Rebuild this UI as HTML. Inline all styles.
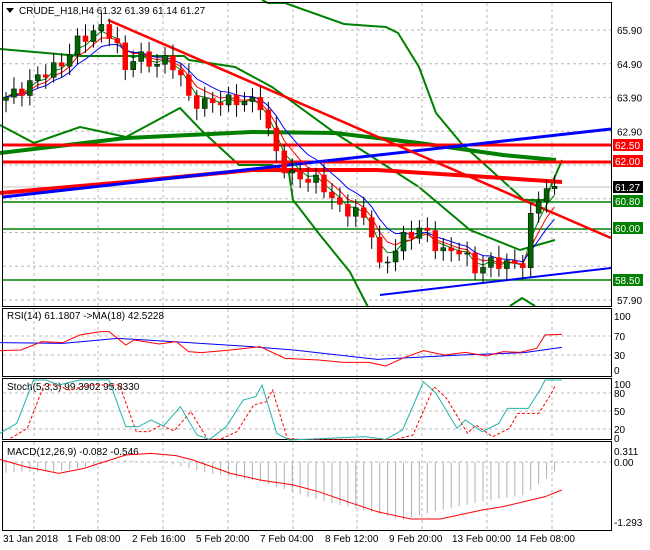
<!DOCTYPE html>
<html><head><meta charset="utf-8"><style>
html,body{margin:0;padding:0;background:#fff;width:650px;height:550px;overflow:hidden}
svg{display:block}
text{font-family:"Liberation Sans",sans-serif;font-size:10px}
</style></head><body>
<svg id="s" width="650" height="550" viewBox="0 0 650 550" xmlns="http://www.w3.org/2000/svg">
<rect width="650" height="550" fill="#fff"/>
<g id="grid" stroke="#b8b8b8" stroke-dasharray="3,3" stroke-width="1"></g>
<g id="main"></g>
<g fill="none" stroke="#000" stroke-width="1">
<rect x="2.5" y="2.5" width="609" height="304"/>
<rect x="2.5" y="308.5" width="609" height="68"/>
<rect x="2.5" y="378.5" width="609" height="61"/>
<rect x="2.5" y="441.5" width="609" height="89"/>
</g>
<polygon points="6,8 14,8 10,13" fill="#000"/>
<text x="19" y="14" fill="#000">CRUDE_H18,H4  61.32 61.39 61.14 61.27</text>
<g id="axis"></g>
<text x="7" y="319" fill="#000">RSI(14) 61.1807  -&gt;MA(18) 42.5228</text>
<text x="7" y="390" fill="#000">Stoch(5,3,3) 99.3902 95.8330</text>
<text x="7" y="455" fill="#000">MACD(12,26,9) -0.082 -0.546</text>
<g fill="#000">
<text x="3" y="542">31 Jan 2018</text>
<text x="67" y="542">1 Feb 08:00</text>
<text x="132" y="542">2 Feb 16:00</text>
<text x="196" y="542">5 Feb 20:00</text>
<text x="260" y="542">7 Feb 04:00</text>
<text x="325" y="542">8 Feb 12:00</text>
<text x="389" y="542">9 Feb 20:00</text>
<text x="452" y="542">13 Feb 00:00</text>
<text x="516" y="542">14 Feb 08:00</text>
</g>
</svg>
<script>
const NS="http://www.w3.org/2000/svg";
const S=document.getElementById('s'),M=document.getElementById('main'),G=document.getElementById('grid'),A=document.getElementById('axis');
function el(p,t,a){const e=document.createElementNS(NS,t);for(const k in a)e.setAttribute(k,a[k]);p.appendChild(e);return e;}
function Y(p){return 30+(65.90-p)*33.75;}
const vx=[34,98,163,228,293,357,422,487,552];
vx.forEach(x=>{el(G,'line',{x1:x,y1:3,x2:x,y2:306});el(G,'line',{x1:x,y1:309,x2:x,y2:376});el(G,'line',{x1:x,y1:379,x2:x,y2:439});el(G,'line',{x1:x,y1:442,x2:x,y2:530});});
[65.9,64.9,63.9,62.9,61.9,60.9,59.9,58.9,57.9].forEach(p=>el(G,'line',{x1:3,y1:Y(p),x2:611,y2:Y(p)}));
[336,355,393,411,429,462].forEach(y=>el(G,'line',{x1:3,y1:y,x2:611,y2:y}));
function pl(par,pts,c,w,extra){const a={points:pts.map(p=>p.join(',')).join(' '),fill:'none',stroke:c,'stroke-width':w};Object.assign(a,extra||{});return el(par,'polyline',a);}
function cz(pts,oy){return pts.map(p=>[p[0]/2.385,p[1]/3+oy]);}
pl(M,[[0,49],[80,56],[184,56],[189,60],[235,67],[272,87],[335,133],[419,187],[470,230],[520,250],[555,240]],'#008000',2);
pl(M,[[262,0],[268,3],[285,3],[344,24],[386,27],[398,33],[419,67],[436,113],[461,143],[524,200],[545,200],[562,160]],'#008000',2);
pl(M,[[0,125],[34,143],[80,127],[126,137],[180,108],[201,130],[239,165],[272,165],[289,173],[293,200],[320,235],[350,272],[368,307]],'#008000',2);
pl(M,[[510,306],[522,298],[535,306]],'#008000',2);
pl(M,[[0,153],[126,138],[252,132],[335,133],[419,143],[503,155],[556,160]],'#008000',4);
[[202,'#008000',1.5],[229,'#008000',1.5],[280,'#008000',1.5]].forEach(h=>el(M,'line',{x1:3,y1:h[0],x2:611,y2:h[0],stroke:h[1],'stroke-width':h[2]}));
el(M,'line',{x1:3,y1:187,x2:611,y2:187,stroke:'#c0c0c0','stroke-width':1});
el(M,'line',{x1:3,y1:145,x2:611,y2:145,stroke:'#ff0000','stroke-width':3});
el(M,'line',{x1:3,y1:162,x2:611,y2:162,stroke:'#ff0000','stroke-width':3});
pl(M,[[0,193],[126,182],[252,170],[377,170],[503,178],[562,182]],'#ff0000',4);
el(M,'line',{x1:3,y1:197,x2:611,y2:129,stroke:'#0000ff','stroke-width':3});
el(M,'line',{x1:380,y1:295,x2:611,y2:268,stroke:'#0000ff','stroke-width':2});
el(M,'line',{x1:108,y1:20,x2:611,y2:238,stroke:'#ff0000','stroke-width':2.5});
const kp=[[5,63.9],[20,64.1],[30,64.3],[40,64.6],[50,64.7],[62,64.9],[75,65.5],[90,65.8],[105,66.0],[115,65.6],[125,64.7],[135,65.2],[150,64.9],[170,65.0],[180,64.6],[187,63.9],[200,63.7],[220,63.8],[245,63.8],[262,63.7],[270,62.7],[280,62.0],[290,61.6],[320,61.4],[340,60.6],[360,60.5],[372,59.9],[380,58.8],[390,59.2],[405,59.8],[420,60.0],[430,59.8],[440,59.3],[460,59.4],[475,58.8],[490,59.0],[510,59.0],[520,58.8],[526,59.3],[532,60.6],[540,60.9],[548,61.4],[556,61.27]];
function interp(x){for(let i=1;i<kp.length;i++){if(x<=kp[i][0]){const a=kp[i-1],b=kp[i];return a[1]+(b[1]-a[1])*(x-a[0])/(b[0]-a[0]);}}return kp[kp.length-1][1];}
const N=70,xs=[],cl=[];
for(let i=0;i<N;i++){const x=6+i*7.95;xs.push(x);cl.push(interp(x)+0.18*Math.sin(i*2.3));}
cl[N-1]=61.27;
function ema(a,n){const k=2/(n+1);let r=[a[0]];for(let i=1;i<a.length;i++)r.push(a[i]*k+r[i-1]*(1-k));return r;}
[[ema(cl,3),'#008000'],[ema(cl,5),'#ff0000'],[ema(cl,8),'#0000ff']].forEach(m=>pl(M,m[0].map((v,i)=>[xs[i],Y(v)]),m[1],1));
for(let i=0;i<N;i++){const o=i?cl[i-1]:cl[0]-0.1,c=cl[i],x=xs[i];const hi=Math.max(o,c)+0.15+0.2*Math.abs(Math.sin(i*1.7)),lo=Math.min(o,c)-0.15-0.2*Math.abs(Math.cos(i*1.3));
el(M,'line',{x1:x,y1:Y(hi),x2:x,y2:Y(lo),stroke:'#000','stroke-width':1});
const t=Y(Math.max(o,c)),b=Y(Math.min(o,c));el(M,'rect',{x:x-2.5,y:t,width:5,height:Math.max(1,b-t),fill:c>=o?'#006400':'#ff0000',stroke:c>=o?'#000':'#ff0000','stroke-width':0.5});}
[[65.9,'65.90'],[64.9,'64.90'],[63.9,'63.90'],[62.9,'62.90'],[57.9,'57.90']].forEach(p=>{const t=el(A,'text',{x:617,y:Y(p[0])+4,fill:'#000'});t.textContent=p[1];});
[[145,'62.50','#ff0000'],[161,'62.00','#ff0000'],[187,'61.27','#000'],[201,'60.80','#008000'],[228,'60.00','#008000'],[280,'58.50','#008000']].forEach(b=>{el(A,'rect',{x:613,y:b[0]-6,width:30,height:12,fill:b[2]});const t=el(A,'text',{x:615,y:b[0]+4,fill:'#fff'});t.textContent=b[1];});
[[316,'100'],[336,'70'],[355,'30'],[370,'0'],[384,'100'],[393,'80'],[411,'50'],[429,'20'],[438,'0'],[451,'0.311'],[462,'0.00'],[522,'-1.293']].forEach(p=>{const t=el(A,'text',{x:614,y:p[0]+4,fill:'#000'});t.textContent=p[1];});
pl(S,cz([[0,128],[150,130],[280,115],[450,128],[600,140],[700,150],[900,178],[1100,165],[1250,158],[1340,142]],300),'#0000ff',1);
pl(S,cz([[0,152],[50,150],[100,125],[150,128],[190,105],[240,95],[260,95],[300,135],[320,120],[380,132],[420,125],[450,155],[480,158],[550,150],[620,140],[680,175],[760,180],[820,187],[880,187],[920,198],[960,175],[1010,152],[1060,165],[1110,157],[1160,168],[1200,155],[1240,157],[1280,145],[1300,105],[1340,103]],300),'#ff0000',1);
const st=[[0,400],[40,370],[80,240],[110,240],[140,255],[190,240],[260,240],[300,380],[330,380],[360,360],[390,378],[430,320],[470,405],[500,418],[540,380],[580,300],[610,290],[625,255],[660,400],[690,420],[780,415],[870,410],[920,418],[960,390],[1010,245],[1040,280],[1090,385],[1110,360],[1150,395],[1190,370],[1210,325],[1260,325],[1290,265],[1300,240],[1340,240]];
pl(S,cz(st.map(p=>[p[0]+25,Math.min(418,p[1]+15)]).filter(p=>p[0]<=1340),300),'#ff0000',1,{'stroke-dasharray':'3,2'});
pl(S,cz(st,300),'#20b2aa',1);
const hb=[[0,520],[40,515],[140,515],[200,500],[300,480],[400,490],[500,520],[620,545],[760,600],[900,640],[960,660],[1050,630],[1150,605],[1250,585],[1300,540],[1340,495]];
function hi(x){for(let i=1;i<hb.length;i++)if(x<=hb[i][0]){const a=hb[i-1],b=hb[i];return a[1]+(b[1]-a[1])*(x-a[0])/(b[0]-a[0]);}return 495;}
for(let i=0;i<N;i++){const x=xs[i];const yb=hi(x*2.385)/3+300;el(S,'line',{x1:x,y1:462,x2:x,y2:yb,stroke:'#b0b0b0','stroke-width':1});}
pl(S,cz([[0,478],[60,500],[140,520],[200,505],[300,465],[360,460],[420,467],[460,480],[550,520],[620,540],[700,555],[760,575],[840,610],[900,635],[980,657],[1050,657],[1150,630],[1200,620],[1300,590],[1340,570]],300),'#ff0000',1);
</script>
</body></html>
